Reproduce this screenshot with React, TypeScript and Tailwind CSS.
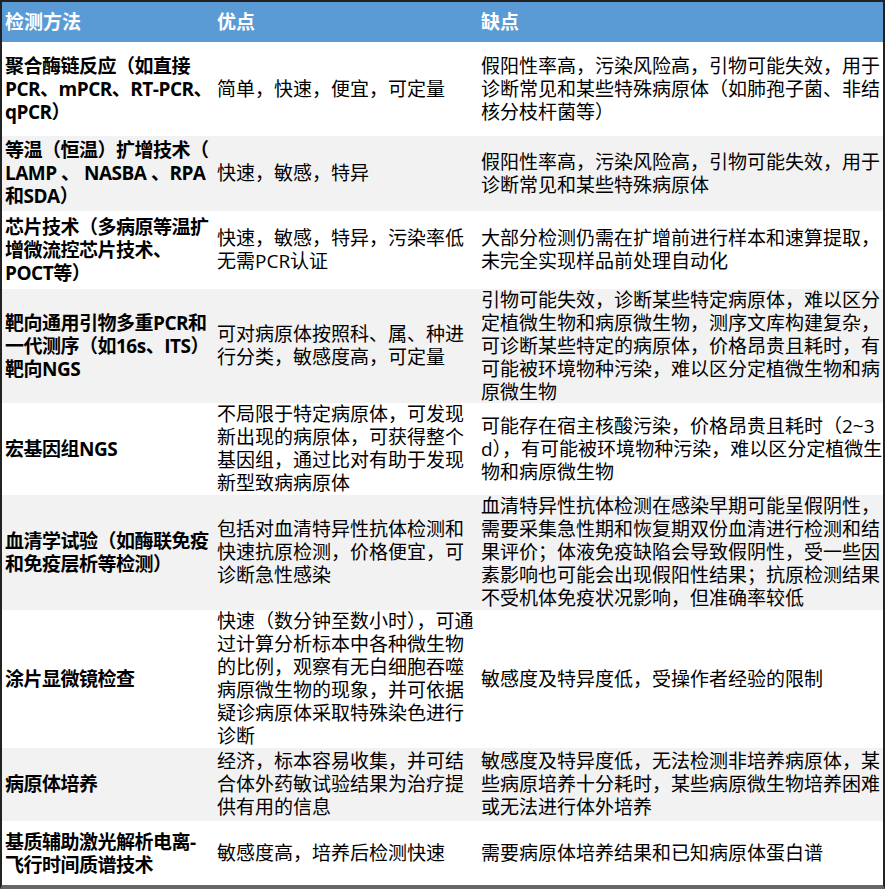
const rows: { h: string; a: string; b: string; c: string }[] = [
  { h: "h-[93px]", a: "聚合酶链反应（如直接PCR、mPCR、RT-PCR、qPCR）", b: "简单，快速，便宜，可定量", c: "假阳性率高，污染风险高，引物可能失效，用于诊断常见和某些特殊病原体（如肺孢子菌、非结核分枝杆菌等）" },
  { h: "h-[76px]", a: "等温（恒温）扩增技术（ LAMP 、 NASBA 、RPA和SDA）", b: "快速，敏感，特异", c: "假阳性率高，污染风险高，引物可能失效，用于诊断常见和某些特殊病原体" },
  { h: "h-[77px]", a: "芯片技术（多病原等温扩增微流控芯片技术、POCT等）", b: "快速，敏感，特异，污染率低无需PCR认证", c: "大部分检测仍需在扩增前进行样本和速算提取，未完全实现样品前处理自动化" },
  { h: "h-[115px]", a: "靶向通用引物多重PCR和一代测序（如16s、ITS）靶向NGS", b: "可对病原体按照科、属、种进行分类，敏感度高，可定量", c: "引物可能失效，诊断某些特定病原体，难以区分定植微生物和病原微生物，测序文库构建复杂，可诊断某些特定的病原体，价格昂贵且耗时，有可能被环境物种污染，难以区分定植微生物和病原微生物" },
  { h: "h-[91px]", a: "宏基因组NGS", b: "不局限于特定病原体，可发现新出现的病原体，可获得整个基因组，通过比对有助于发现新型致病病原体", c: "可能存在宿主核酸污染，价格昂贵且耗时（2~3 d），有可能被环境物种污染，难以区分定植微生物和病原微生物" },
  { h: "h-[116px]", a: "血清学试验（如酶联免疫和免疫层析等检测）", b: "包括对血清特异性抗体检测和快速抗原检测，价格便宜，可诊断急性感染", c: "血清特异性抗体检测在感染早期可能呈假阴性，需要采集急性期和恢复期双份血清进行检测和结果评价；体液免疫缺陷会导致假阴性，受一些因素影响也可能会出现假阳性结果；抗原检测结果不受机体免疫状况影响，但准确率较低" },
  { h: "h-[137px]", a: "涂片显微镜检查", b: "快速（数分钟至数小时），可通过计算分析标本中各种微生物的比例，观察有无白细胞吞噬病原微生物的现象，并可依据疑诊病原体采取特殊染色进行诊断", c: "敏感度及特异度低，受操作者经验的限制" },
  { h: "h-[74px]", a: "病原体培养", b: "经济，标本容易收集，并可结合体外药敏试验结果为治疗提供有用的信息", c: "敏感度及特异度低，无法检测非培养病原体，某些病原培养十分耗时，某些病原微生物培养困难或无法进行体外培养" },
  { h: "h-[64px]", a: "基质辅助激光解析电离-飞行时间质谱技术", b: "敏感度高，培养后检测快速", c: "需要病原体培养结果和已知病原体蛋白谱" },
];

export default function App() {
  return (
    <div className="w-[885px] h-[889px] bg-white text-[19px] leading-[23px] text-black" style={{ fontFamily: '"Open Sans","Noto Sans CJK SC",sans-serif' }}>
      <div className="border-2 border-[#222] border-b-[4px] border-b-[#666] w-[885px]">
        <div className="flex h-[40px] items-center bg-[#5b9bd5] text-white font-bold text-[19px]">
          <div className="w-[211px] pl-[3px]">检测方法</div>
          <div className="w-[264px] pl-[4px]">优点</div>
          <div className="flex-1 pl-[4px]">缺点</div>
        </div>
        {rows.map((r, i) => (
          <div key={i} className={`flex items-center border-t border-white ${r.h} ${i % 2 ? "bg-[#f2f2f2]" : "bg-white"}`}>
            <div className="w-[211px] pl-[3px] font-bold tracking-[-0.5px]">{r.a}</div>
            <div className="w-[264px] pl-[4px] pr-[2px]">{r.b}</div>
            <div className="flex-1 pl-[4px]">{r.c}</div>
          </div>
        ))}
      </div>
    </div>
  );
}
